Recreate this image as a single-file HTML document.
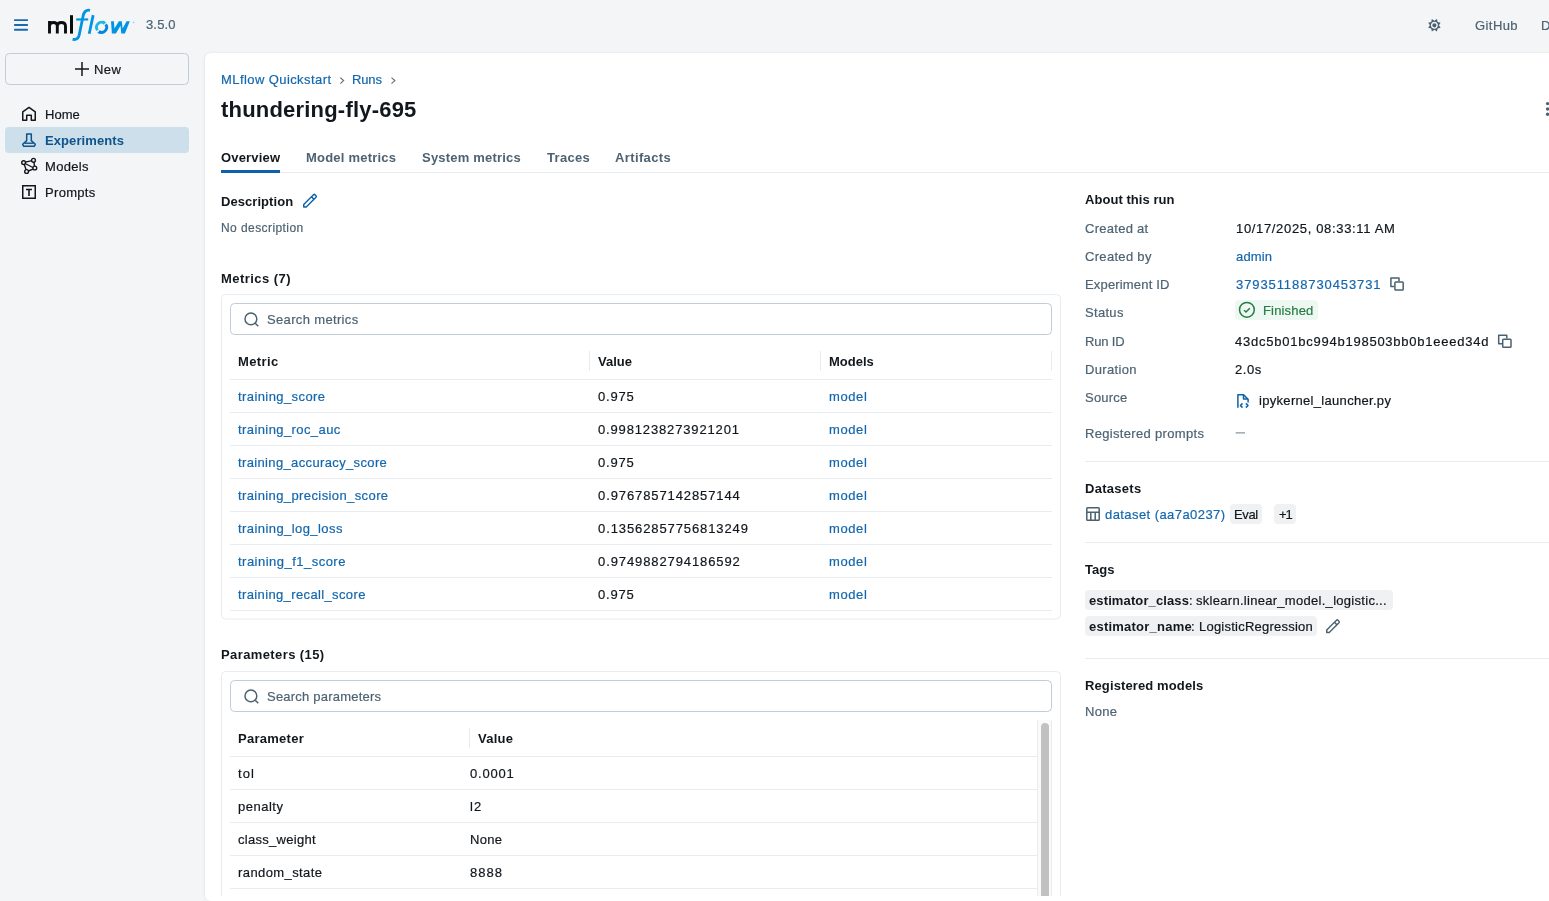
<!DOCTYPE html>
<html><head><meta charset="utf-8"><title>thundering-fly-695 - MLflow Run</title>
<style>
html,body{margin:0;padding:0;width:1549px;height:901px;overflow:hidden;background:#f4f5f7;font-family:"Liberation Sans",sans-serif;}
.t{position:absolute;white-space:pre;line-height:1;will-change:transform;}
.r{-webkit-text-stroke:0.2px currentColor;}
.a{position:absolute;box-sizing:border-box;}
svg{position:absolute;overflow:visible;}
</style></head><body>
<!-- header -->
<svg style="left:0;top:0" width="1549" height="901" viewBox="0 0 1549 901">
  <!-- hamburger -->
  <g fill="#1a6aae"><rect x="14" y="19.2" width="14" height="1.9" rx=".6"/><rect x="14" y="24" width="14" height="1.9" rx=".6"/><rect x="14" y="28.8" width="14" height="1.9" rx=".6"/></g>
  <!-- logo ml -->
  <g fill="none" stroke="#0b0e10" stroke-width="2.9">
    <path d="M49.5 33.6V21M49.5 25.8C49.7 23.4 51.2 22.5 53.2 22.5C55.6 22.5 57.3 23.8 57.3 26.2V33.6M57.3 25.8C57.5 23.4 59.1 22.5 61.2 22.5C63.8 22.5 65.5 23.8 65.5 26.2V33.6"/>
  </g>
  <rect x="70" y="15.2" width="3" height="18.4" fill="#0b0e10"/>
  <!-- logo flow -->
  <g fill="none" stroke="#0194e2" stroke-width="2.8" stroke-linecap="butt">
    <path d="M90 10.3C86 9.6 84 11.5 83.1 16L79.2 35C78.4 38.6 76.6 40 72.6 39.4"/>
    <path d="M93.2 15.1L89.2 33.7"/>
    
  </g>
  <rect x="76.2" y="18.4" width="12" height="2.1" fill="#0194e2"/>
  <path d="M111 21.2H113.9L114.4 28.4L118.9 21.2H121.8L122.6 28.4L126.6 21.2H129.8L124.9 33.6H121.3L120.5 25.8L115.9 33.6H111.9Z" fill="#0194e2"/>
  <path d="M97.55 30.24A5 5 0 0 1 104.47 23.2" fill="none" stroke="#1fb6e6" stroke-width="2.8"/><path d="M103 20.6L106.2 22.4L103.3 24.8Z" fill="#1fb6e6"/>
  <path d="M105.7 24.43A5 5 0 0 1 98.95 31.54" fill="none" stroke="#0287dc" stroke-width="2.8"/><path d="M100.3 30.2L97.2 32.9L100.6 33.9Z" fill="#0287dc"/>
  <circle cx="133.6" cy="22.4" r="0.9" fill="#9fd5f2"/>
  <!-- gear (theme) -->
  <g transform="translate(1434.4 25.3)" fill="#4a6170">
    <path d="M0.00 -4.50L2.56 -6.19L3.18 -3.18L6.19 -2.56L4.50 0.00L6.19 2.56L3.18 3.18L2.56 6.19L0.00 4.50L-2.56 6.19L-3.18 3.18L-6.19 2.56L-4.50 0.00L-6.19 -2.56L-3.18 -3.18L-2.56 -6.19Z"/>
    <circle r="2.8" fill="none" stroke="#f4f5f7" stroke-width="1.4"/>
    
  </g>
  <!-- sidebar new button -->
  <rect x="5.5" y="53.5" width="183" height="31" rx="4" fill="none" stroke="#c0cdd8"/>
  <g stroke="#11171c" stroke-width="1.5"><path d="M82 62V76M75 69H89"/></g>
  <!-- selected nav -->
  <rect x="5" y="127" width="184" height="26" rx="4" fill="#cddfea"/>
  <!-- home icon -->
  <path d="M22.75 120.25V111.8L29 107.4L35.25 111.8V120.25H31.3V115.2H26.7V120.25Z" fill="none" stroke="#11171c" stroke-width="1.5" stroke-linejoin="round"/>
  <!-- flask -->
  <path d="M26.7 133.9H31.3V140.6L35.3 144.3L34.2 146.3H23.8L22.7 144.3L26.7 140.6Z" fill="none" stroke="#0e538b" stroke-width="1.5" stroke-linejoin="round"/>
  <path d="M24.5 143.2H33.5" stroke="#0e538b" stroke-width="1.4"/>
  <!-- models icon -->
  <g fill="none" stroke="#11171c" stroke-width="1.4">
    <path d="M25.3 162.1L32 160.6M25.1 163.5L32.9 167.5M24.3 164.4L26 169.5M33.9 162.2L34.5 166M33 169.1L28.3 171"/>
    <circle cx="23.6" cy="162.6" r="1.9"/><circle cx="33.5" cy="160.3" r="1.9"/><circle cx="34.8" cy="168" r="1.9"/><circle cx="26.6" cy="171.5" r="1.9"/>
  </g>
  <!-- prompts icon -->
  <rect x="22.75" y="185.75" width="12.5" height="12.5" fill="none" stroke="#11171c" stroke-width="1.5"/>
  <path d="M26 189.5H32M29 189.5V196" stroke="#11171c" stroke-width="1.6"/>
</svg>

<!-- main white panel -->
<div class="a" style="left:204.5px;top:53px;width:1400px;height:848px;background:#fff;border-radius:6px;box-shadow:0 0 3px rgba(0,0,0,0.05),-1px 0 3px rgba(0,0,0,0.035);"></div>

<svg style="left:0;top:0" width="1549" height="901" viewBox="0 0 1549 901">
  <!-- breadcrumb chevrons -->
  <path d="M340.3 77.6L343.6 80.6L340.3 83.6M391.5 77.6L394.8 80.6L391.5 83.6" fill="none" stroke="#5f7281" stroke-width="1.2"/>
  <!-- kebab -->
  <g fill="#4a6170"><circle cx="1547.6" cy="103.6" r="1.7"/><circle cx="1547.6" cy="109" r="1.7"/><circle cx="1547.6" cy="114.3" r="1.7"/></g>
  <!-- tabs line -->
  <rect x="221" y="172" width="1328" height="1" fill="#e8ecf0"/>
  <rect x="221" y="170" width="59" height="3" fill="#0d61a8"/>
  <!-- description pencil -->
  <path transform="translate(302 192.7)" fill-rule="evenodd" fill="#0d61a8" d="M13.487 1.513A1.75 1.75 0 0 0 11.013 1.513L1.22 11.306A0.75 0.75 0 0 0 1 11.836V14.25C1 14.664 1.336 15 1.75 15H4.164A0.75 0.75 0 0 0 4.694 14.78L14.487 4.987A1.75 1.75 0 0 0 14.487 2.513ZM12.073 2.573A0.25 0.25 0 0 1 12.427 2.573L13.513 3.659A0.25 0.25 0 0 1 13.513 4.013L12 5.525L10.475 4ZM9.414 5.061L2.5 11.975V13.5H4.025L10.939 6.586Z"/>

  <!-- metrics box -->
  <rect x="221.5" y="294.5" width="839" height="324.5" rx="4" fill="none" stroke="#e8ecf0"/>
  <rect x="230.5" y="303.5" width="821" height="31" rx="4" fill="none" stroke="#c0cdd8"/>
  <g fill="none" stroke="#4a6170" stroke-width="1.5"><circle cx="250.9" cy="318.9" r="5.9"/><path d="M255.2 323.2L258.3 326.3"/></g>
  <g fill="#e8ecf0">
    <rect x="589" y="351" width="1" height="20"/><rect x="820" y="351" width="1" height="20"/><rect x="1051" y="351" width="1" height="20"/>
    <rect x="230" y="379" width="822" height="1"/>
    <rect x="230" y="412" width="822" height="1"/><rect x="230" y="445" width="822" height="1"/><rect x="230" y="478" width="822" height="1"/>
    <rect x="230" y="511" width="822" height="1"/><rect x="230" y="544" width="822" height="1"/><rect x="230" y="577" width="822" height="1"/>
    <rect x="230" y="610" width="822" height="1"/>
  </g>

  <!-- params box -->
  <rect x="221.5" y="671.5" width="839" height="300" rx="4" fill="none" stroke="#e8ecf0"/>
  <rect x="230.5" y="680.5" width="821" height="31" rx="4" fill="none" stroke="#c0cdd8"/>
  <g fill="none" stroke="#4a6170" stroke-width="1.5"><circle cx="250.9" cy="695.9" r="5.9"/><path d="M255.2 700.2L258.3 703.3"/></g>
  <g fill="#e8ecf0">
    <rect x="469" y="728" width="1" height="20"/>
    <rect x="230" y="756" width="807" height="1"/><rect x="230" y="789" width="807" height="1"/><rect x="230" y="822" width="807" height="1"/>
    <rect x="230" y="855" width="807" height="1"/><rect x="230" y="888" width="807" height="1"/>
  </g>
  <!-- scrollbar -->
  <rect x="1037" y="720" width="15" height="176" fill="#fafafa"/>
  <rect x="1037" y="720" width="1" height="176" fill="#ececec"/>
  <rect x="1051" y="720" width="1" height="176" fill="#ececec"/>
  <rect x="1041" y="723" width="8" height="200" rx="4" fill="#c1c1c1"/>
  <!-- bottom mask: page ends at 896 -->

  <!-- right panel: copy icons -->
  <g fill="none" stroke="#4a6170" stroke-width="1.5" stroke-linejoin="round">
    <path d="M1394.2 286.5H1390.9V277.9H1399V281.2"/><rect x="1394.9" y="281.9" width="8.3" height="8.1" rx=".8"/>
    <path d="M1502.1 347.5-0" /><path d="M1502 343.8H1498.7V335.2H1506.8V338.5"/><rect x="1502.7" y="339.2" width="8.3" height="8.1" rx=".8"/>
  </g>
  <!-- status tag -->
  <rect x="1235" y="300" width="83" height="20" rx="4" fill="#eef8f2"/>
  <g fill="none" stroke="#277c43" stroke-width="1.5"><circle cx="1246.9" cy="309.8" r="7.4"/><path d="M1244.1 310.2L1246 312L1249.8 308.2"/></g>
  <!-- source file icon -->
  <g fill="none" stroke="#0d61a8" stroke-width="1.5" stroke-linejoin="round">
    <path d="M1237.9 407.7V394.7H1243.5L1248.1 399.3V402.4"/><path d="M1243.5 394.7V399.1H1248"/>
    <path d="M1242.5 403.4L1240.4 405.5L1242.5 407.6M1245.9 403.4L1248 405.5L1245.9 407.6"/>
  </g>
  <!-- dividers right -->
  <rect x="1085" y="461" width="464" height="1" fill="#e8ecf0"/>
  <rect x="1085" y="542" width="464" height="1" fill="#e8ecf0"/>
  <rect x="1085" y="658" width="464" height="1" fill="#e8ecf0"/>
  <!-- dataset table icon -->
  <g fill="none" stroke="#4a6170" stroke-width="1.5">
    <rect x="1086.8" y="507.8" width="12.4" height="12.4" rx=".8"/><path d="M1086.8 512.2H1099.2M1090.8 512.2V520.2M1095.2 512.2V520.2"/>
  </g>
  <rect x="1230" y="504" width="32" height="20" rx="4" fill="#f0f1f3"/>
  <rect x="1274" y="504" width="22" height="20" rx="4" fill="#f0f1f3"/>
  <!-- tags -->
  <rect x="1085" y="590" width="308" height="20" rx="4" fill="#f0f1f3"/>
  <rect x="1085" y="616" width="232" height="20" rx="4" fill="#f0f1f3"/>
  <path transform="translate(1325 618.2)" fill-rule="evenodd" fill="#4a6170" d="M13.487 1.513A1.75 1.75 0 0 0 11.013 1.513L1.22 11.306A0.75 0.75 0 0 0 1 11.836V14.25C1 14.664 1.336 15 1.75 15H4.164A0.75 0.75 0 0 0 4.694 14.78L14.487 4.987A1.75 1.75 0 0 0 14.487 2.513ZM12.073 2.573A0.25 0.25 0 0 1 12.427 2.573L13.513 3.659A0.25 0.25 0 0 1 13.513 4.013L12 5.525L10.475 4ZM9.414 5.061L2.5 11.975V13.5H4.025L10.939 6.586Z"/>
  <!-- dash -->
  <rect x="1235.7" y="432.4" width="9.3" height="1" fill="#6b7d8b"/>
</svg>
<div class="t r" style="left:146.3px;top:18.3px;font-size:13px;color:#4d6373;letter-spacing:0.145px;">3.5.0</div>
<div class="t r" style="left:1474.7px;top:18.9px;font-size:13px;color:#4d6373;letter-spacing:0.426px;">GitHub</div>
<div class="t r" style="left:1541.3px;top:18.9px;font-size:13px;color:#4d6373;">Docs</div>
<div class="t r" style="left:93.6px;top:63.1px;font-size:13px;color:#11171c;letter-spacing:0.392px;">New</div>
<div class="t r" style="left:45.3px;top:107.9px;font-size:13px;color:#11171c;letter-spacing:0.037px;">Home</div>
<div class="t" style="left:45.3px;top:134.0px;font-size:13px;color:#0e538b;font-weight:700;letter-spacing:0.085px;">Experiments</div>
<div class="t r" style="left:45.3px;top:160.0px;font-size:13px;color:#11171c;letter-spacing:0.316px;">Models</div>
<div class="t r" style="left:45.3px;top:186.0px;font-size:13px;color:#11171c;letter-spacing:0.316px;">Prompts</div>
<div class="t r" style="left:221.1px;top:73.1px;font-size:13px;color:#1467ad;letter-spacing:0.418px;">MLflow Quickstart</div>
<div class="t r" style="left:352.0px;top:73.1px;font-size:13px;color:#1467ad;letter-spacing:-0.153px;">Runs</div>
<div class="t" style="left:221.1px;top:98.7px;font-size:22px;color:#11171c;font-weight:700;letter-spacing:0.200px;">thundering-fly-695</div>
<div class="t" style="left:221.1px;top:151.0px;font-size:13px;color:#11171c;font-weight:700;letter-spacing:0.182px;">Overview</div>
<div class="t" style="left:306.1px;top:151.0px;font-size:13px;color:#4d6373;font-weight:700;letter-spacing:0.215px;">Model metrics</div>
<div class="t" style="left:421.6px;top:151.0px;font-size:13px;color:#4d6373;font-weight:700;letter-spacing:0.206px;">System metrics</div>
<div class="t" style="left:546.6px;top:151.0px;font-size:13px;color:#4d6373;font-weight:700;letter-spacing:0.319px;">Traces</div>
<div class="t" style="left:614.6px;top:151.0px;font-size:13px;color:#4d6373;font-weight:700;letter-spacing:0.381px;">Artifacts</div>
<div class="t" style="left:221.4px;top:194.8px;font-size:13px;color:#11171c;font-weight:700;letter-spacing:0.058px;">Description</div>
<div class="t r" style="left:221.4px;top:221.8px;font-size:12px;color:#4d6373;letter-spacing:0.422px;">No description</div>
<div class="t" style="left:221.2px;top:271.7px;font-size:13px;color:#11171c;font-weight:700;letter-spacing:0.457px;">Metrics (7)</div>
<div class="t r" style="left:267.0px;top:313.2px;font-size:13px;color:#4d6373;letter-spacing:0.346px;">Search metrics</div>
<div class="t" style="left:238.2px;top:355.0px;font-size:13px;color:#11171c;font-weight:700;letter-spacing:0.381px;">Metric</div>
<div class="t" style="left:598.3px;top:355.0px;font-size:13px;color:#11171c;font-weight:700;">Value</div>
<div class="t" style="left:829.1px;top:355.0px;font-size:13px;color:#11171c;font-weight:700;">Models</div>
<div class="t r" style="left:237.9px;top:390.0px;font-size:13px;color:#1467ad;letter-spacing:0.411px;">training_score</div>
<div class="t r" style="left:598.0px;top:390.0px;font-size:13px;color:#11171c;letter-spacing:0.813px;">0.975</div>
<div class="t r" style="left:828.8px;top:390.0px;font-size:13px;color:#1467ad;letter-spacing:0.595px;">model</div>
<div class="t r" style="left:237.9px;top:423.0px;font-size:13px;color:#1467ad;letter-spacing:0.412px;">training_roc_auc</div>
<div class="t r" style="left:598.0px;top:423.0px;font-size:13px;color:#11171c;letter-spacing:0.851px;">0.9981238273921201</div>
<div class="t r" style="left:828.8px;top:423.0px;font-size:13px;color:#1467ad;letter-spacing:0.595px;">model</div>
<div class="t r" style="left:237.9px;top:456.0px;font-size:13px;color:#1467ad;letter-spacing:0.359px;">training_accuracy_score</div>
<div class="t r" style="left:598.0px;top:456.0px;font-size:13px;color:#11171c;letter-spacing:0.813px;">0.975</div>
<div class="t r" style="left:828.8px;top:456.0px;font-size:13px;color:#1467ad;letter-spacing:0.595px;">model</div>
<div class="t r" style="left:237.9px;top:489.0px;font-size:13px;color:#1467ad;letter-spacing:0.399px;">training_precision_score</div>
<div class="t r" style="left:598.0px;top:489.0px;font-size:13px;color:#11171c;letter-spacing:0.898px;">0.9767857142857144</div>
<div class="t r" style="left:828.8px;top:489.0px;font-size:13px;color:#1467ad;letter-spacing:0.595px;">model</div>
<div class="t r" style="left:237.9px;top:522.0px;font-size:13px;color:#1467ad;letter-spacing:0.426px;">training_log_loss</div>
<div class="t r" style="left:598.0px;top:522.0px;font-size:13px;color:#11171c;letter-spacing:0.896px;">0.13562857756813249</div>
<div class="t r" style="left:828.8px;top:522.0px;font-size:13px;color:#1467ad;letter-spacing:0.595px;">model</div>
<div class="t r" style="left:237.9px;top:555.0px;font-size:13px;color:#1467ad;letter-spacing:0.479px;">training_f1_score</div>
<div class="t r" style="left:598.0px;top:555.0px;font-size:13px;color:#11171c;letter-spacing:0.898px;">0.9749882794186592</div>
<div class="t r" style="left:828.8px;top:555.0px;font-size:13px;color:#1467ad;letter-spacing:0.595px;">model</div>
<div class="t r" style="left:237.9px;top:588.0px;font-size:13px;color:#1467ad;letter-spacing:0.372px;">training_recall_score</div>
<div class="t r" style="left:598.0px;top:588.0px;font-size:13px;color:#11171c;letter-spacing:0.813px;">0.975</div>
<div class="t r" style="left:828.8px;top:588.0px;font-size:13px;color:#1467ad;letter-spacing:0.595px;">model</div>
<div class="t" style="left:221.2px;top:648.0px;font-size:13px;color:#11171c;font-weight:700;letter-spacing:0.396px;">Parameters (15)</div>
<div class="t r" style="left:267.1px;top:690.0px;font-size:13px;color:#4d6373;letter-spacing:0.221px;">Search parameters</div>
<div class="t" style="left:237.8px;top:732.2px;font-size:13px;color:#11171c;font-weight:700;letter-spacing:0.274px;">Parameter</div>
<div class="t" style="left:478.0px;top:732.2px;font-size:13px;color:#11171c;font-weight:700;letter-spacing:0.258px;">Value</div>
<div class="t r" style="left:237.8px;top:767.0px;font-size:13px;color:#11171c;letter-spacing:1.133px;">tol</div>
<div class="t r" style="left:469.8px;top:767.0px;font-size:13px;color:#11171c;letter-spacing:0.807px;">0.0001</div>
<div class="t r" style="left:237.8px;top:800.0px;font-size:13px;color:#11171c;letter-spacing:0.496px;">penalty</div>
<div class="t r" style="left:469.8px;top:800.0px;font-size:13px;color:#11171c;letter-spacing:1.075px;">l2</div>
<div class="t r" style="left:237.8px;top:833.0px;font-size:13px;color:#11171c;letter-spacing:0.287px;">class_weight</div>
<div class="t r" style="left:469.8px;top:833.0px;font-size:13px;color:#11171c;letter-spacing:0.341px;">None</div>
<div class="t r" style="left:237.8px;top:866.0px;font-size:13px;color:#11171c;letter-spacing:0.409px;">random_state</div>
<div class="t r" style="left:469.8px;top:866.0px;font-size:13px;color:#11171c;letter-spacing:1.059px;">8888</div>
<div class="t r" style="left:237.8px;top:899.0px;font-size:13px;color:#11171c;">max_iter</div>
<div class="t r" style="left:469.8px;top:899.0px;font-size:13px;color:#11171c;">100</div>
<div class="t" style="left:1085.2px;top:193.1px;font-size:13px;color:#11171c;font-weight:700;letter-spacing:0.052px;">About this run</div>
<div class="t r" style="left:1085.2px;top:221.9px;font-size:13px;color:#4d6373;letter-spacing:0.277px;">Created at</div>
<div class="t r" style="left:1085.2px;top:250.0px;font-size:13px;color:#4d6373;letter-spacing:0.312px;">Created by</div>
<div class="t r" style="left:1085.2px;top:277.6px;font-size:13px;color:#4d6373;letter-spacing:0.169px;">Experiment ID</div>
<div class="t r" style="left:1085.2px;top:306.0px;font-size:13px;color:#4d6373;letter-spacing:0.308px;">Status</div>
<div class="t r" style="left:1085.2px;top:335.1px;font-size:13px;color:#4d6373;letter-spacing:-0.174px;">Run ID</div>
<div class="t r" style="left:1085.2px;top:363.1px;font-size:13px;color:#4d6373;letter-spacing:0.351px;">Duration</div>
<div class="t r" style="left:1085.2px;top:391.0px;font-size:13px;color:#4d6373;letter-spacing:0.219px;">Source</div>
<div class="t r" style="left:1085.2px;top:427.2px;font-size:13px;color:#4d6373;letter-spacing:0.320px;">Registered prompts</div>
<div class="t r" style="left:1235.9px;top:221.9px;font-size:13px;color:#11171c;letter-spacing:0.662px;">10/17/2025, 08:33:11 AM</div>
<div class="t r" style="left:1235.9px;top:249.6px;font-size:13px;color:#1467ad;letter-spacing:0.170px;">admin</div>
<div class="t r" style="left:1235.9px;top:277.6px;font-size:13px;color:#1467ad;letter-spacing:0.907px;">379351188730453731</div>
<div class="t r" style="left:1263.2px;top:303.5px;font-size:13px;color:#277c43;letter-spacing:0.166px;">Finished</div>
<div class="t r" style="left:1235.3px;top:334.7px;font-size:13px;color:#11171c;letter-spacing:0.761px;">43dc5b01bc994b198503bb0b1eeed34d</div>
<div class="t r" style="left:1235.3px;top:362.8px;font-size:13px;color:#11171c;letter-spacing:0.574px;">2.0s</div>
<div class="t r" style="left:1259.1px;top:394.4px;font-size:13px;color:#11171c;letter-spacing:0.308px;">ipykernel_launcher.py</div>
<div class="t" style="left:1085.1px;top:482.1px;font-size:13px;color:#11171c;font-weight:700;letter-spacing:0.285px;">Datasets</div>
<div class="t r" style="left:1105.0px;top:507.6px;font-size:13px;color:#1467ad;letter-spacing:0.431px;">dataset (aa7a0237)</div>
<div class="t r" style="left:1234.2px;top:507.6px;font-size:13px;color:#11171c;letter-spacing:-0.366px;">Eval</div>
<div class="t r" style="left:1278.6px;top:507.6px;font-size:13px;color:#11171c;letter-spacing:-1.028px;">+1</div>
<div class="t" style="left:1085.1px;top:563.0px;font-size:13px;color:#11171c;font-weight:700;">Tags</div>
<div class="t" style="left:1089.1px;top:593.9px;font-size:13px;color:#11171c;font-weight:700;letter-spacing:0.116px;">estimator_class</div>
<div class="t r" style="left:1188.6px;top:593.9px;font-size:13px;color:#11171c;">:</div>
<div class="t r" style="left:1196.3px;top:593.9px;font-size:13px;color:#11171c;letter-spacing:0.288px;">sklearn.linear_model._logistic...</div>
<div class="t" style="left:1089.1px;top:619.9px;font-size:13px;color:#11171c;font-weight:700;letter-spacing:0.229px;">estimator_name</div>
<div class="t r" style="left:1191.3px;top:619.9px;font-size:13px;color:#11171c;">:</div>
<div class="t r" style="left:1199.2px;top:619.9px;font-size:13px;color:#11171c;letter-spacing:0.227px;">LogisticRegression</div>
<div class="t" style="left:1085.1px;top:679.0px;font-size:13px;color:#11171c;font-weight:700;letter-spacing:0.117px;">Registered models</div>
<div class="t r" style="left:1085.1px;top:705.0px;font-size:13px;color:#4d6373;letter-spacing:0.307px;">None</div>
<div class="a" style="left:213px;top:896px;width:1336px;height:5px;background:#fff;"></div>
</body></html>
